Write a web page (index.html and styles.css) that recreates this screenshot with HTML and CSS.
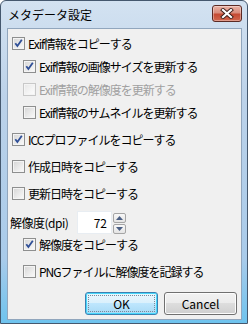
FILE: index.html
```html
<!DOCTYPE html>
<html lang="ja">
<head>
  <meta charset="UTF-8" />
  <title>メタデータ設定</title>
  <link rel="stylesheet" href="styles.css">
</head>
<body>

  <div class="window">
    <div class="titlebar">
      <span class="title">メタデータ設定</span>
      <span class="close">
        <svg width="16" height="11" viewBox="0 0 16 11">
          <path d="M4 2 L12 9 M12 2 L4 9" stroke="#3b1e1a" stroke-width="4" stroke-linecap="square" fill="none"/>
          <path d="M4 2 L12 9 M12 2 L4 9" stroke="#fff" stroke-width="2.2" stroke-linecap="square" fill="none"/>
        </svg>
      </span>
    </div>

    <div class="client">
      <div class="group">
        <div class="row">
          <span class="box"><svg class="tick" viewBox="0 0 11 11"><path d="M2.3 5.2 L4.4 8 L8.8 1.8"/></svg></span>
          Exif情報をコピーする
        </div>
        <div class="row indent">
          <span class="box"><svg class="tick" viewBox="0 0 11 11"><path d="M2.3 5.2 L4.4 8 L8.8 1.8"/></svg></span>
          Exif情報の画像サイズを更新する
        </div>
        <div class="row indent disabled">
          <span class="box"></span>
          Exif情報の解像度を更新する
        </div>
        <div class="row indent">
          <span class="box"></span>
          Exif情報のサムネイルを更新する
        </div>
      </div>

      <div class="row">
        <span class="box"><svg class="tick" viewBox="0 0 11 11"><path d="M2.3 5.2 L4.4 8 L8.8 1.8"/></svg></span>
        ICCプロファイルをコピーする
      </div>
      <div class="row">
        <span class="box"></span>
        作成日時をコピーする
      </div>
      <div class="row">
        <span class="box"></span>
        更新日時をコピーする
      </div>

      <div class="dpi-group">
        <div class="dpi-row">
          <span class="dpi-label">解像度(dpi)</span>
          <span class="num">72</span>
          <span class="spin">
            <span class="spin-btn"><svg width="7" height="4" viewBox="0 0 7 4"><path d="M0 4 L3.5 0 L7 4 Z" fill="#4b5f84"/></svg></span>
            <span class="spin-btn"><svg width="7" height="4" viewBox="0 0 7 4"><path d="M0 0 L3.5 4 L7 0 Z" fill="#4b5f84"/></svg></span>
          </span>
        </div>
        <div class="row indent">
          <span class="box"><svg class="tick" viewBox="0 0 11 11"><path d="M2.3 5.2 L4.4 8 L8.8 1.8"/></svg></span>
          解像度をコピーする
        </div>
      </div>

      <div class="row indent">
        <span class="box"></span>
        PNGファイルに解像度を記録する
      </div>

      <div class="buttons">
        <button class="btn default"><span class="focus">OK</span></button>
        <button class="btn">Cancel</button>
      </div>
    </div>
  </div>

</body>
</html>
```

FILE: styles.css
```css
body {
  margin: 0;
  font-family: "Noto Sans CJK JP", "Liberation Sans", sans-serif;
  font-size: 12px;
  color: #000;
}
.window {
  width: 248px;
  height: 324px;
  box-sizing: border-box;
  border: 1px solid #45586e;
  border-radius: 6px 6px 0 0;
  background: linear-gradient(#d3e2f1, #bcd2e9 30%, #a9cbea 80%, #6ec3ee);
  padding: 0 5px 3px 6px;
  display: flex;
  flex-direction: column;
}
.titlebar {
  height: 27px;
  display: flex;
  align-items: flex-start;
  justify-content: space-between;
}
.title {
  margin-top: 5px;
  margin-left: 1px;
  font-size: 12px;
  line-height: 17px;
}
.close {
  width: 30px;
  height: 17px;
  box-sizing: border-box;
  margin-top: 4px;
  border: 1px solid #5b2a24;
  border-radius: 3px;
  background: linear-gradient(#eab3a5, #d98c7c 45%, #c54a33 55%, #d2684f);
  display: flex;
  align-items: center;
  justify-content: center;
  box-shadow: inset 0 0 0 1px rgba(255,255,255,0.35);
}
.client {
  flex: 1;
  background-color: #f0f0f0;
  border: 1px solid #91a6bd;
  display: flex;
  flex-direction: column;
  gap: 9px;
  padding: 5px 4px 0 4px;
}
.group {
  display: flex;
  flex-direction: column;
  gap: 5px;
}
.row {
  display: flex;
  align-items: center;
  height: 18px;
  letter-spacing: -1px;
  white-space: nowrap;
}
.indent {
  margin-left: 11px;
}
.box {
  width: 13px;
  height: 13px;
  box-sizing: border-box;
  border: 1px solid #8e8f8f;
  background: linear-gradient(135deg, #d5d5d5, #ececec 60%, #fbfbfb);
  box-shadow: inset 0 0 0 1px #f4f4f4;
  margin-right: 3px;
  flex-shrink: 0;
  display: flex;
  align-items: center;
  justify-content: center;
}
.tick {
  width: 11px;
  height: 11px;
}
.tick path {
  fill: none;
  stroke: #2f4f97;
  stroke-width: 1.8;
}
.disabled {
  color: #a0a0a0;
}
.disabled .box {
  border-color: #c8c8c8;
  background: linear-gradient(135deg, #e6e6e6, #f5f5f5 60%, #fdfdfd);
}
.dpi-group {
  display: flex;
  flex-direction: column;
  gap: 1px;
}
.dpi-row {
  display: flex;
  align-items: flex-start;
  height: 23px;
}
.dpi-label {
  width: 67px;
  margin-left: -2px;
  line-height: 23px;
  letter-spacing: -0.5px;
}
.num {
  width: 35px;
  height: 23px;
  box-sizing: border-box;
  background: #fff;
  border: 1px solid #e8edf2;
  text-align: right;
  padding-right: 4px;
  line-height: 21px;
}
.spin {
  display: flex;
  flex-direction: column;
  gap: 1px;
  margin-top: 2px;
  margin-left: 1px;
}
.spin-btn {
  width: 13px;
  height: 10px;
  box-sizing: border-box;
  border: 1px solid #a5a5a5;
  border-radius: 2px;
  background: linear-gradient(#f8f8f8, #e4e4e4);
  display: flex;
  align-items: center;
  justify-content: center;
}
.buttons {
  display: flex;
  justify-content: flex-end;
  gap: 6px;
  margin-top: 3px;
}
.btn {
  width: 73px;
  height: 23px;
  padding: 0;
  font-family: "Noto Sans CJK JP", "Liberation Sans", sans-serif;
  font-size: 12px;
  color: #000;
  border: 1px solid #707070;
  border-radius: 3px;
  background: linear-gradient(#f2f2f2, #ebebeb 50%, #dddddd 50%, #cfcfcf);
  box-shadow: inset 0 0 0 1px #fcfcfc;
}
.btn.default {
  border-color: #3c7fb1;
  background: linear-gradient(#eaf6fd, #d9f0fc 50%, #bee6fd 50%, #a7d9f5);
  box-shadow: inset 0 0 0 1px #48d8fb;
  padding: 2px;
}
.focus {
  display: block;
  height: 100%;
  box-sizing: border-box;
  border: 1px dotted #7a8a9a;
  line-height: 15px;
}
```
